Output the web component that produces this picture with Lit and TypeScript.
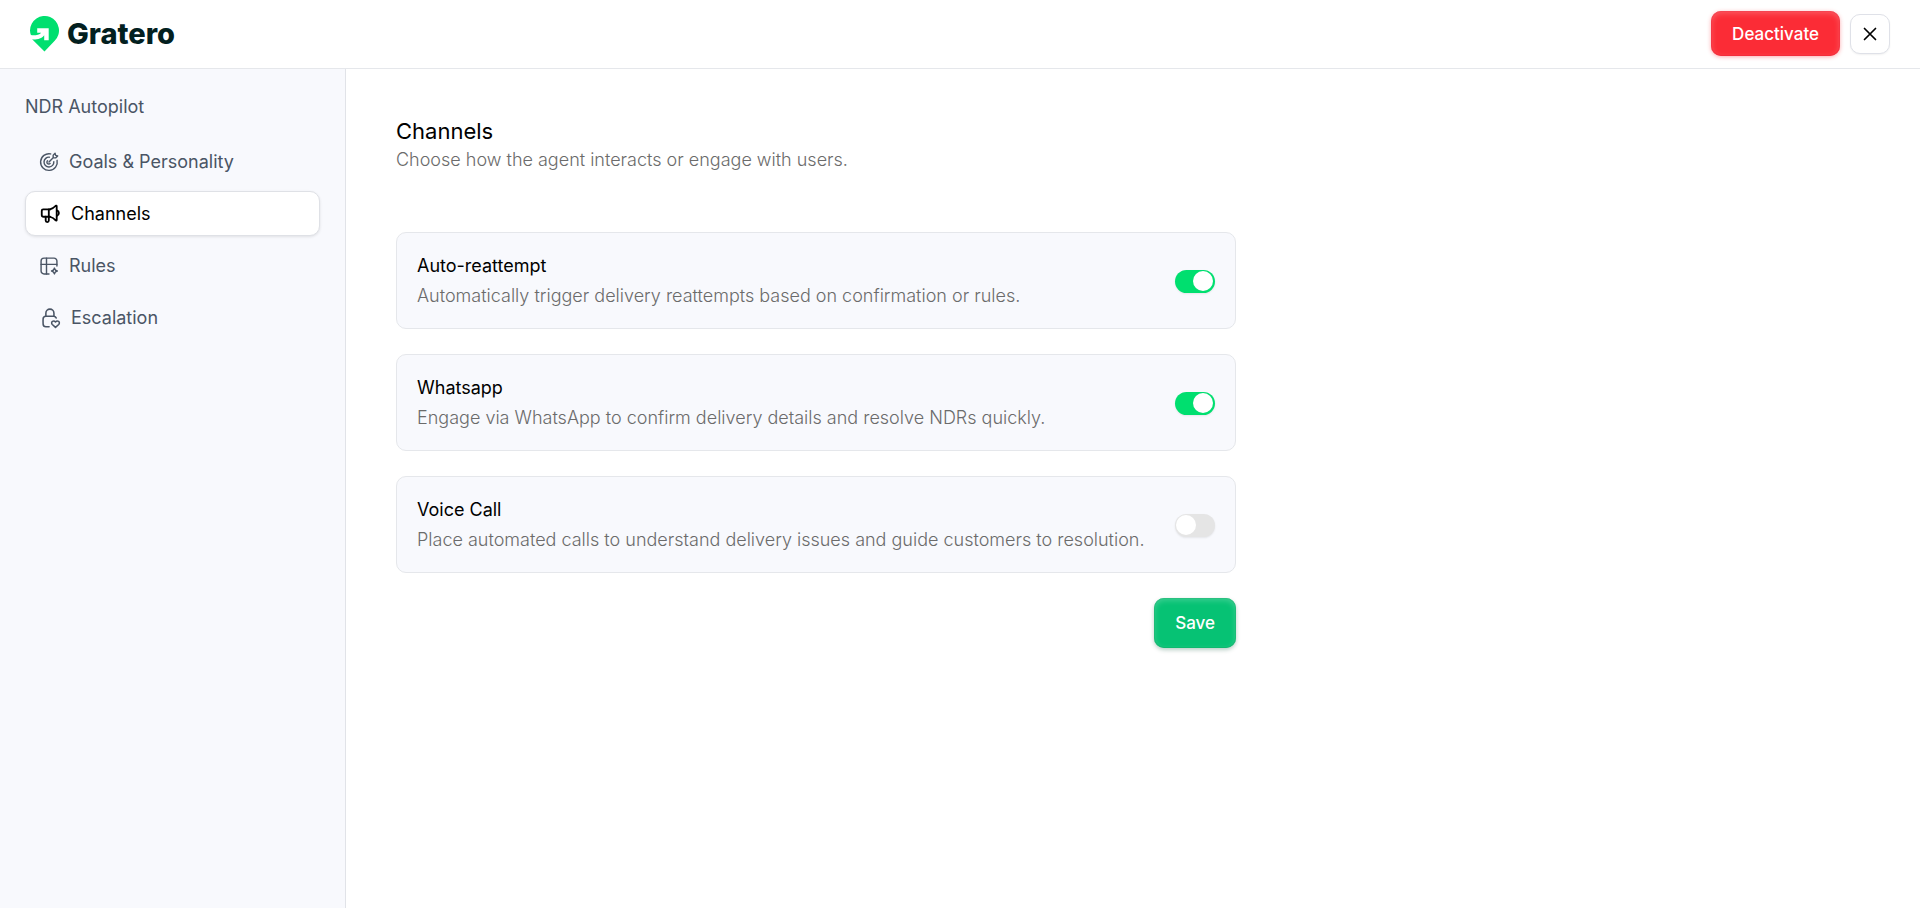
import { LitElement, html, css, svg } from "lit";
import { customElement, property, state } from "lit/decorators.js";
import { classMap } from "lit/directives/class-map.js";

const goalsIcon = svg`<svg class="icon" width="20" height="20" viewBox="0 0 24 24" aria-hidden="true">
  <path d="M14 2.300A10 10 0 1 0 21.700 10"/>
  <path d="M12.500 6.200A5.900 5.900 0 1 0 17.800 11.600"/>
  <path d="M10.300 10.600a2.200 2.200 0 1 0 3.100 3.100"/>
  <path d="M12 12l5-5m0 0V3.800L19.300 1.600l.7 2.400 2.400.7L20.200 7H17z"/>
</svg>`;

const channelsIcon = svg`<svg class="icon" width="22" height="22" viewBox="0 0 24 24" aria-hidden="true">
  <path d="M12 7H4.500a1.500 1.500 0 0 0-1.500 1.500v4.500A2 2 0 0 0 5 15h7"/>
  <path d="M12 7c2.500-.8 4.600-2.200 6.200-4 .4-.4 1.100-.2 1.100.4v15.200c0 .6-.7.800-1.100.4-1.600-1.800-3.700-3.200-6.200-4"/>
  <path d="M19.500 8c1.400.4 2.200 1.500 2.200 3s-.8 2.600-2.200 3"/>
  <path d="M7.300 15v4.200c0 1 .7 1.600 1.700 1.600s1.700-.6 1.700-1.600V7"/>
</svg>`;

const rulesIcon = svg`<svg class="icon" width="20" height="20" viewBox="0 0 24 24" aria-hidden="true">
  <path d="M12 21.500H6A3.500 3.500 0 0 1 2.500 18V6A3.500 3.500 0 0 1 6 2.500h12A3.500 3.500 0 0 1 21.500 6v6"/>
  <path d="M2.500 10h19M9 2.500v19"/>
  <path d="M18.500 14.500c.5 2.200 1.300 3 3.500 3.500-2.200.5-3 1.300-3.500 3.500-.5-2.200-1.300-3-3.500-3.500 2.200-.5 3-1.300 3.500-3.500z"/>
</svg>`;

const escalationIcon = svg`<svg class="icon" width="22" height="22" viewBox="0 0 24 24" aria-hidden="true">
  <path d="M11 21.500H7.500A3 3 0 0 1 4.500 18.700a41 41 0 0 1 0-6A3 3 0 0 1 7.300 10h8.900a3 3 0 0 1 2.600 2"/>
  <path d="M7.500 10V6.700a4.400 4.400 0 0 1 8.800 0V10"/>
  <path d="M18 22.300l-3.500-3.200c-1-1-.9-2.700.2-3.400 1.100-.7 2.400-.3 3.300.7.900-1 2.200-1.400 3.300-.7 1.100.7 1.200 2.400.2 3.400z"/>
</svg>`;

interface NavItem {
  id: string;
  label: string;
  icon: unknown;
}

interface Channel {
  id: string;
  title: string;
  text: string;
  on: boolean;
}

const NAV: NavItem[] = [
  { id: "goals", label: "Goals & Personality", icon: goalsIcon },
  { id: "channels", label: "Channels", icon: channelsIcon },
  { id: "rules", label: "Rules", icon: rulesIcon },
  { id: "escalation", label: "Escalation", icon: escalationIcon },
];

@customElement("channel-card")
export class ChannelCard extends LitElement {
  @property({ attribute: false }) channel!: Channel;

  static styles = css`
    :host {
      display: block;
    }
    .card {
      display: flex;
      align-items: center;
      justify-content: space-between;
      gap: 20px;
      box-sizing: border-box;
      padding: 18px 20px 17px;
      border: 1px solid #e5e7eb;
      border-radius: 10px;
      background: #f8f9fd;
    }
    .title {
      display: block;
      font-size: 18px;
      line-height: 30px;
      color: #000;
    }
    .text {
      margin: 0;
      font-size: 18px;
      line-height: 30px;
      font-weight: 300;
      color: #6b6b6b;
    }
    .switch {
      appearance: none;
      flex: none;
      display: flex;
      align-items: center;
      box-sizing: border-box;
      width: 40px;
      height: 23px;
      margin: 0;
      padding: 0 2px 0 1px;
      border-radius: 12px;
      background: #e5e5e5;
      box-shadow: 0 1px 2px rgba(0, 0, 0, 0.08);
      cursor: pointer;
    }
    .switch::before {
      content: "";
      width: 20px;
      height: 20px;
      border-radius: 50%;
      background: #fff;
    }
    .switch:checked {
      justify-content: flex-end;
      background: #00df6f;
    }
  `;

  render() {
    const { id, title, text, on } = this.channel;
    return html`
      <div class="card">
        <div>
          <label class="title" for=${id}>${title}</label>
          <p class="text" id="about">${text}</p>
        </div>
        <input class="switch" type="checkbox" role="switch" id=${id} aria-describedby="about" .checked=${on} />
      </div>
    `;
  }
}

@customElement("app-root")
export class AppRoot extends LitElement {
  @state() private current = "channels";

  private channels: Channel[] = [
    {
      id: "reattempt",
      title: "Auto-reattempt",
      text: "Automatically trigger delivery reattempts based on confirmation or rules.",
      on: true,
    },
    {
      id: "whatsapp",
      title: "Whatsapp",
      text: "Engage via WhatsApp to confirm delivery details and resolve NDRs quickly.",
      on: true,
    },
    {
      id: "voice",
      title: "Voice Call",
      text: "Place automated calls to understand delivery issues and guide customers to resolution.",
      on: false,
    },
  ];

  static styles = css`
    :host {
      display: flex;
      flex-direction: column;
      min-height: 100vh;
      background: #fff;
      color: #000;
      font-family: Inter, "Liberation Sans", sans-serif;
      font-size: 18px;
    }
    .header {
      display: flex;
      align-items: center;
      justify-content: space-between;
      box-sizing: border-box;
      height: 69px;
      padding: 0 30px 1px;
      border-bottom: 1px solid #e5e7eb;
    }
    .brand {
      display: flex;
      align-items: center;
      gap: 8px;
      color: #03201f;
      font-size: 29px;
      line-height: 36px;
      font-weight: 800;
      text-decoration: none;
    }
    .actions {
      display: flex;
      align-items: center;
      gap: 10px;
    }
    .button {
      padding: 0 21px;
      border: 0;
      border-radius: 10px;
      color: #fff;
      font: inherit;
      font-size: 17px;
      font-weight: 500;
      cursor: pointer;
    }
    .danger {
      height: 45px;
      background: #fb2c36;
      box-shadow: 0 1px 4px rgba(251, 44, 54, 0.4), inset 0 2px 6px rgba(255, 255, 255, 0.25),
        inset 0 0 0 1px rgba(235, 20, 40, 0.5);
    }
    .primary {
      height: 50px;
      background: #06c274;
      box-shadow: 0 2px 4px rgba(0, 80, 50, 0.28), inset 0 2px 6px rgba(255, 255, 255, 0.25),
        inset 0 0 0 1px rgba(0, 170, 95, 0.6);
    }
    .close {
      display: grid;
      place-items: center;
      width: 40px;
      height: 40px;
      padding: 0;
      border: 1px solid #dfe1e8;
      border-radius: 10px;
      background: #fff;
      box-shadow: 0 1px 2px rgba(0, 0, 0, 0.06);
      cursor: pointer;
    }
    .body {
      display: flex;
      flex: 1;
    }
    .sidebar {
      flex: none;
      box-sizing: border-box;
      width: 346px;
      padding: 23px 25px;
      border-right: 1px solid #e1e3e8;
      background: #f8f9fd;
      color: #4a5565;
    }
    .group {
      margin: 0 0 17px;
      font-size: 18px;
      line-height: 30px;
      font-weight: 400;
    }
    .nav {
      display: grid;
      gap: 7px;
    }
    .item {
      display: flex;
      align-items: center;
      gap: 10px;
      box-sizing: border-box;
      height: 45px;
      padding: 0 13px;
      border: 1px solid transparent;
      border-radius: 10px;
      color: inherit;
      text-decoration: none;
    }
    .selected {
      border-color: #dfe1e6;
      background: #fff;
      color: #000;
      box-shadow: 0 1px 3px rgba(0, 0, 0, 0.1);
    }
    .icon {
      flex: none;
      fill: none;
      stroke: currentColor;
      stroke-width: 1.7;
      stroke-linecap: round;
      stroke-linejoin: round;
    }
    .selected .icon {
      stroke-width: 2;
    }
    .main {
      flex: 1;
      padding: 46px 50px;
    }
    .content {
      display: grid;
      gap: 25px;
      max-width: 840px;
    }
    .intro {
      padding-bottom: 34px;
    }
    .heading {
      margin: 0;
      font-size: 22px;
      line-height: 32px;
      font-weight: 400;
    }
    .lead {
      margin: 0;
      font-size: 18px;
      line-height: 26px;
      font-weight: 300;
      color: #6b6b6b;
    }
    .save {
      justify-self: end;
    }
  `;

  private select(event: Event, id: string) {
    event.preventDefault();
    this.current = id;
  }

  render() {
    return html`
      <header class="header">
        <a class="brand" href="#">
          <svg width="29" height="36" viewBox="0 0 29 36" aria-hidden="true">
            <path fill="#00df6f" d="M0 14.500A14.500 14.500 0 1 1 24.700 24.800L14.500 35.500 2.100 23.200C9 24.300 12.500 21.500 14.200 19.300V24.200H18.700V12.300H7.200V16.700H11.300C9 18.900 5 19.700.9 19.100A14 14 0 0 1 0 14.500z"/>
          </svg>
          <span>Gratero</span>
        </a>
        <div class="actions">
          <button class="button danger" type="button">Deactivate</button>
          <button class="close" type="button" aria-label="Close">
            <svg width="14" height="14" viewBox="0 0 14 14" fill="none" stroke="#000" stroke-width="1.7" stroke-linecap="round" aria-hidden="true">
              <path d="M1.500 1.500l11 11M12.500 1.500l-11 11" />
            </svg>
          </button>
        </div>
      </header>
      <div class="body">
        <aside class="sidebar">
          <h2 class="group">NDR Autopilot</h2>
          <nav class="nav" aria-label="NDR Autopilot">
            ${NAV.map(
              (item) => html`<a
                class=${classMap({ item: true, selected: item.id === this.current })}
                href="#${item.id}"
                @click=${(event: Event) => this.select(event, item.id)}
                >${item.icon}<span>${item.label}</span></a
              >`
            )}
          </nav>
        </aside>
        <main class="main">
          <div class="content">
            <div class="intro">
              <h1 class="heading">Channels</h1>
              <p class="lead">Choose how the agent interacts or engage with users.</p>
            </div>
            ${this.channels.map((channel) => html`<channel-card .channel=${channel}></channel-card>`)}
            <button class="button primary save" type="button">Save</button>
          </div>
        </main>
      </div>
    `;
  }
}
